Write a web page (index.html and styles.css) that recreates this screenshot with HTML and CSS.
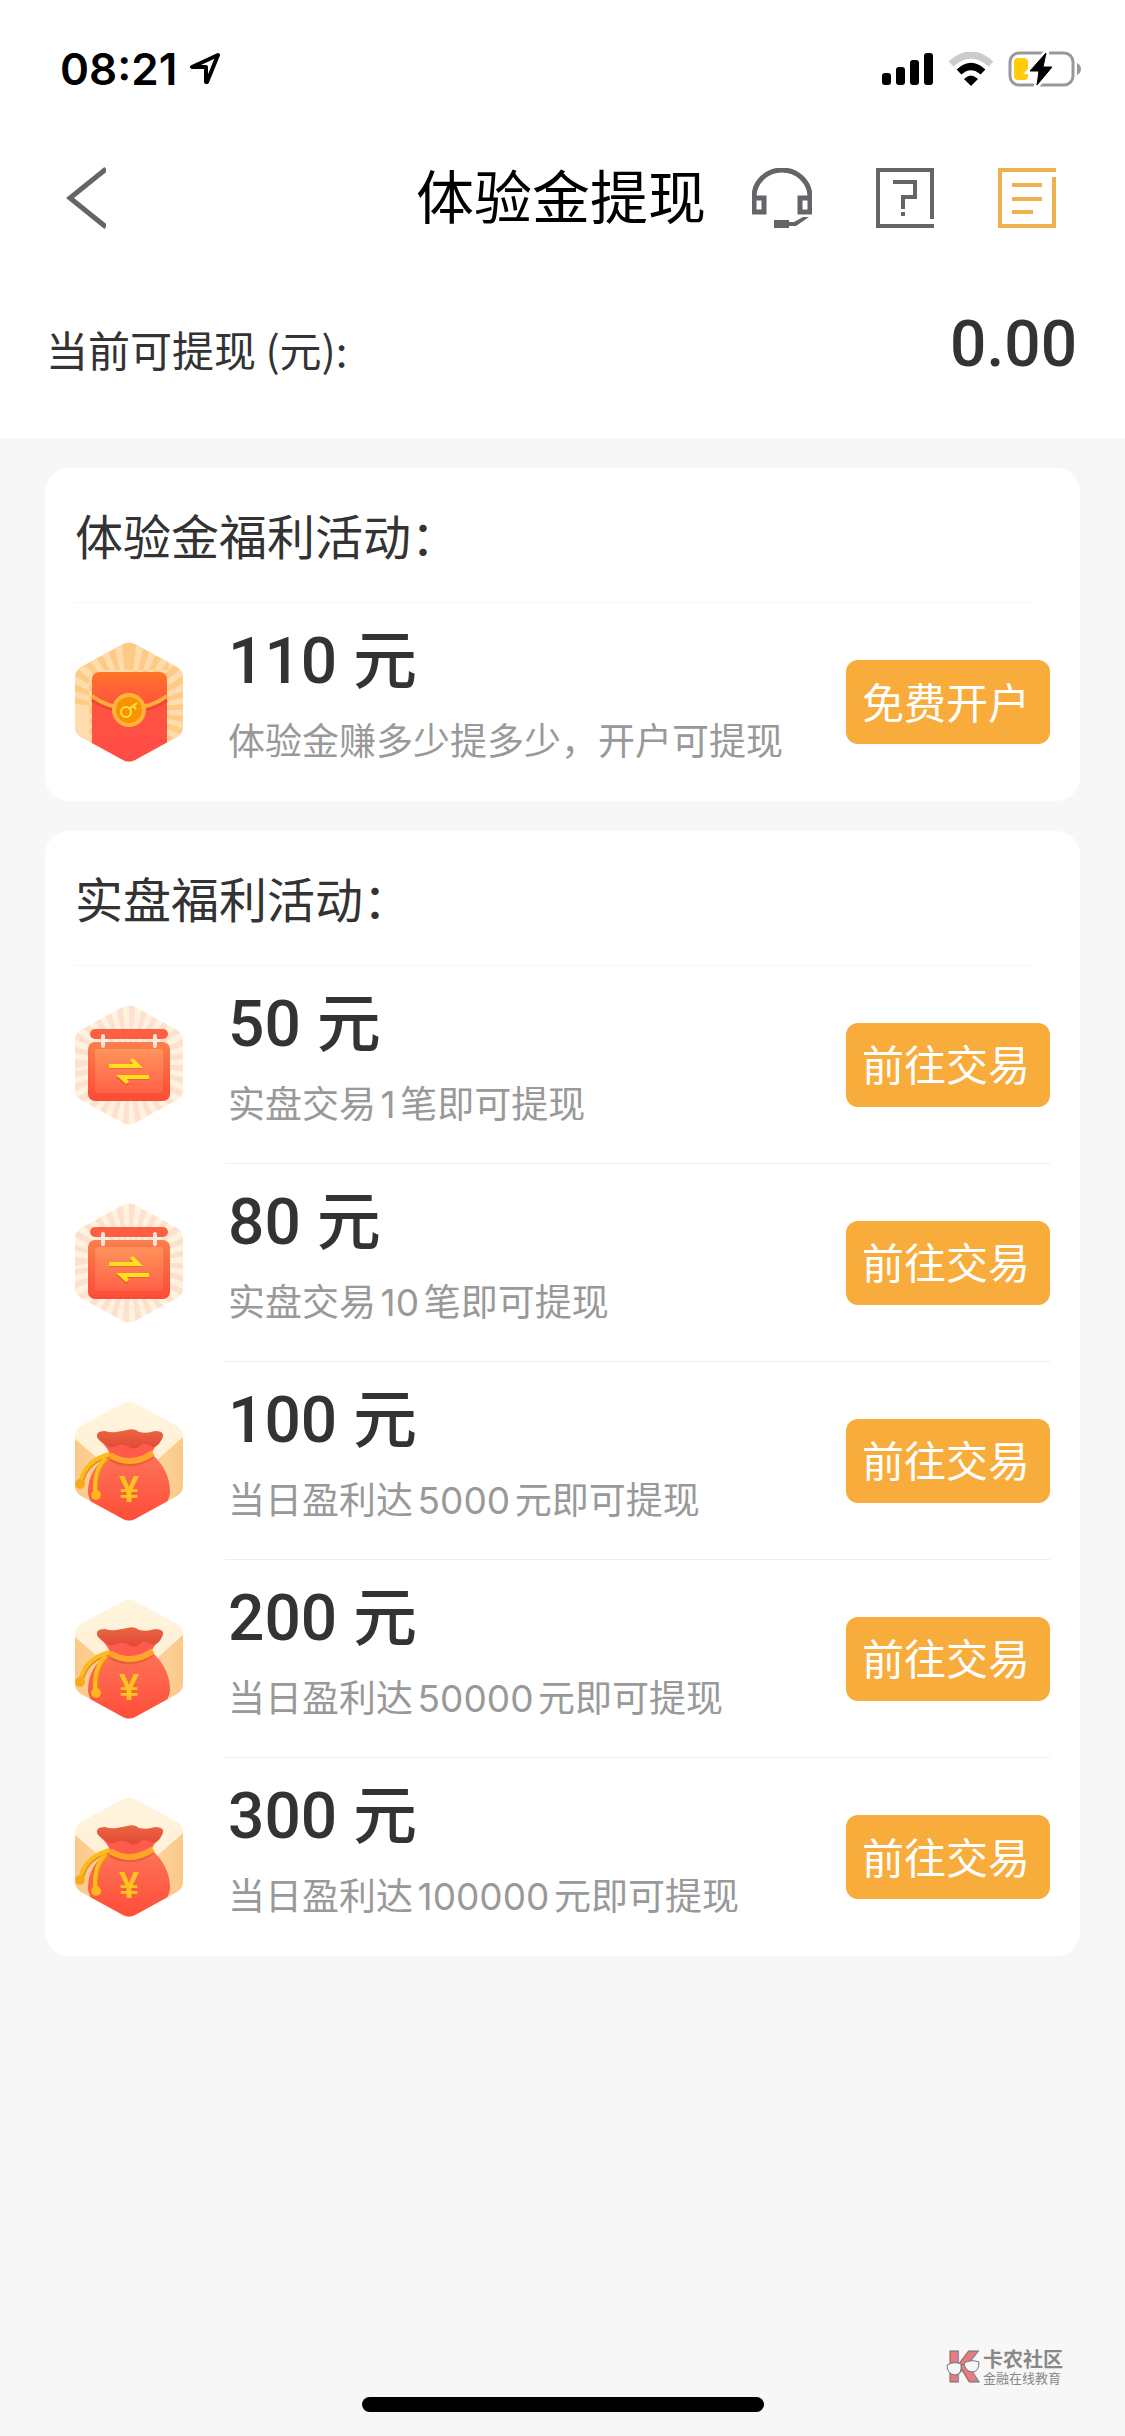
FILE: index.html
```html
<!DOCTYPE html>
<html lang="zh-CN">
<head>
    <meta charset="UTF-8">
    <meta name="viewport" content="width=device-width, initial-scale=1.0">
    <title>体验金提现</title>
    <link rel="stylesheet" href="styles.css">
</head>
<body>
    <!-- 共用图标 -->
    <svg class="icon-defs" aria-hidden="true">
        <defs>
            <clipPath id="hex">
                <path d="M48 2Q54-1 60 2L102 25Q108 29 108 35V85Q108 91 102 95L60 118Q54 121 48 118L6 95Q0 91 0 85V35Q0 29 6 25Z"/>
            </clipPath>
            <linearGradient id="packetFill" x1="0" y1="0" x2="0" y2="1">
                <stop offset="0" stop-color="#ff7426"/>
                <stop offset="0.35" stop-color="#ff5440"/>
                <stop offset="1" stop-color="#ff4c48"/>
            </linearGradient>
            <linearGradient id="boardFill" x1="0" y1="0" x2="0" y2="1">
                <stop offset="0" stop-color="#fb7f4b"/>
                <stop offset="1" stop-color="#fe4a37"/>
            </linearGradient>
            <linearGradient id="boardInner" x1="0" y1="0" x2="0" y2="1">
                <stop offset="0" stop-color="#ff935a"/>
                <stop offset="1" stop-color="#ff6246"/>
            </linearGradient>
            <linearGradient id="bagFill" x1="0" y1="0" x2="0" y2="1">
                <stop offset="0" stop-color="#fd7358"/>
                <stop offset="1" stop-color="#ff4c38"/>
            </linearGradient>
            <linearGradient id="bagTop" x1="0" y1="0" x2="0" y2="1">
                <stop offset="0" stop-color="#ec6443"/>
                <stop offset="1" stop-color="#e04a35"/>
            </linearGradient>
            <linearGradient id="paper" x1="0" y1="0" x2="0" y2="1">
                <stop offset="0" stop-color="#fff4de"/>
                <stop offset="1" stop-color="#ffeecd"/>
            </linearGradient>
            <linearGradient id="paperSide" x1="0" y1="0" x2="1" y2="0">
                <stop offset="0" stop-color="#fbc988"/>
                <stop offset="0.5" stop-color="#fddcae"/>
                <stop offset="1" stop-color="#fbc988"/>
            </linearGradient>
        </defs>

        <symbol id="icon-packet" viewBox="0 0 108 120">
            <g clip-path="url(#hex)">
                <rect width="108" height="120" fill="#fecb87"/>
                <circle class="rays" cx="54" cy="68" r="40" pathLength="56" stroke="#fedcae"/>
                <path d="M17 120V38Q17 30 25 30H84Q92 30 92 38V120Z" fill="url(#packetFill)"/>
                <path d="M17 58Q32 68 54 70Q77 68 92 58" fill="none" stroke="#e63f2d" stroke-width="4" opacity="0.6"/>
                <path d="M17 54Q31 65 54 67Q78 65 92 54" fill="none" stroke="#ffae38" stroke-width="4"/>
                <circle cx="54" cy="68" r="17" fill="#ffb43b"/>
                <circle cx="54" cy="68" r="13" fill="#fb9200"/>
                <circle cx="51" cy="70" r="5" fill="none" stroke="#ffe645" stroke-width="2"/>
                <path d="M54 67L62 61M58 64L61 67" fill="none" stroke="#ffe645" stroke-width="2"/>
            </g>
        </symbol>

        <symbol id="icon-board" viewBox="0 0 108 120">
            <g clip-path="url(#hex)">
                <rect width="108" height="120" fill="#fff3de"/>
                <circle class="rays" cx="54" cy="60" r="40" pathLength="56" stroke="#fde0d0"/>
                <rect x="15" y="24" width="78" height="10" rx="5" fill="#fe5f42"/>
                <rect x="13" y="37" width="82" height="59" rx="7" fill="url(#boardFill)"/>
                <rect x="20" y="44" width="68" height="44" rx="3" fill="url(#boardInner)"/>
                <rect x="26" y="29" width="4" height="14" rx="2" fill="#ffe6dd"/>
                <rect x="78" y="29" width="4" height="14" rx="2" fill="#ffe6dd"/>
                <path d="M34 61H58L55 57L58 54L68 64H34ZM74 72H41L51 81L54 79L52 75H74Z" fill="#c93a1c" opacity="0.35"/>
                <path d="M34 59H58L55 55L58 53L68 63H34ZM74 70H41L51 79L54 77L52 74H74Z" fill="#ffe01e"/>
            </g>
        </symbol>

        <symbol id="icon-bag" viewBox="0 0 108 120">
            <g clip-path="url(#hex)">
                <rect width="108" height="120" fill="url(#paper)"/>
                <path d="M0 38L54 84L108 36V120H0Z" fill="url(#paperSide)"/>
                <path d="M34 54Q13 68 13 91Q13 110 54 121Q95 110 95 91Q95 70 78 54Z" fill="url(#bagFill)"/>
                <path d="M24 39Q34 47 36 56Q56 66 76 54Q78 47 86 39Z" fill="#ff5a4c"/>
                <path d="M23 38Q19 30 30 30Q36 32 41 31Q48 30 52 29Q60 27 64 31Q72 33 80 30Q91 30 87 38Q83 46 78 46Q71 41 66 44Q60 50 54 46Q47 42 42 45Q35 48 31 44Q27 40 23 38Z" fill="url(#bagTop)"/>
                <path d="M35 58Q56 70 78 55" fill="none" stroke="#e3582b" stroke-width="4" opacity="0.7"/>
                <path d="M35 54Q56 67 78 52" fill="none" stroke="#ffa52b" stroke-width="6"/>
                <path d="M35 54Q12 60 7 79M32 58Q20 68 21 90" fill="none" stroke="#e58d1b" stroke-width="5"/>
                <path d="M35 53Q11 59 6 79M31 57Q19 68 20 90" fill="none" stroke="#ffba20" stroke-width="4"/>
                <circle cx="5" cy="83" r="5" fill="#f9a91d"/>
                <circle cx="21" cy="94" r="5" fill="#ffb61f"/>
            </g>
        </symbol>
    </svg>

    <header class="main-header">
        <div class="status-bar">
            <div class="status-left">
                <span>08:21</span>
                <svg width="32" height="32" viewBox="0 0 32 32" fill="none" stroke="#000" stroke-width="4" stroke-linejoin="round">
                    <path d="M29 2L3 14H17V29H18Z"/>
                </svg>
            </div>
            <div class="status-right">
                <svg width="52" height="34" viewBox="0 0 52 34">
                    <rect x="0" y="21" width="9" height="12" rx="3"/>
                    <rect x="14" y="15" width="9" height="18" rx="3"/>
                    <rect x="28" y="8" width="9" height="25" rx="3"/>
                    <rect x="42" y="1" width="9" height="32" rx="3"/>
                </svg>
                <svg width="46" height="34" viewBox="0 0 46 34">
                    <path d="M3 12Q23-6 43 12" fill="none" stroke="#ccc" stroke-width="7"/>
                    <path d="M11 20Q23 9 35 20" fill="none" stroke="#000" stroke-width="7"/>
                    <path d="M16 27Q23 20 30 27L23 34Z"/>
                </svg>
                <svg width="74" height="36" viewBox="0 0 74 36">
                    <rect x="2" y="2" width="63" height="32" rx="9" fill="none" stroke="#999" stroke-width="3"/>
                    <path d="M69 12Q73 14 73 18Q73 22 69 24Z" fill="#999"/>
                    <rect x="6" y="7" width="14" height="22" rx="4" fill="#ffcc0a"/>
                    <path d="M38 2L22 20H31L29 34L44 16H35Z" stroke="#fff" stroke-width="6"/>
                    <path d="M38 2L22 20H31L29 34L44 16H35Z" stroke="#000" stroke-width="1" stroke-linejoin="round"/>
                </svg>
            </div>
        </div>

        <nav class="nav-bar">
            <button class="icon-btn" aria-label="返回">
                <svg width="40" height="62" viewBox="0 0 40 62" fill="none" stroke="#646569" stroke-width="5">
                    <path d="M40 2L4 31L40 60"/>
                </svg>
            </button>
            <h1 class="page-title">体验金提现</h1>
            <div class="nav-actions">
                <button class="icon-btn" aria-label="客服">
                    <svg width="60" height="60" viewBox="0 0 60 60" fill="none" stroke="#646569">
                        <path d="M2 30V29A28 27 0 0 1 58 29V30" stroke-width="5"/>
                        <path d="M2 30H12V44H2ZM48 30H58V44H48Z" stroke-width="5"/>
                        <path d="M22 52H37V54H42L51 49H57L44 58H37V60H22Z" fill="#646569" stroke="none"/>
                    </svg>
                </button>
                <button class="icon-btn" aria-label="帮助">
                    <svg width="58" height="60" viewBox="0 0 58 60" fill="none" stroke="#646569" stroke-width="4">
                        <path d="M56 51V2H2V58H58"/>
                        <path d="M17 14H39V29H27V41M27 44V48"/>
                    </svg>
                </button>
                <button class="icon-btn" aria-label="明细">
                    <svg width="58" height="60" viewBox="0 0 58 60" fill="none" stroke="#efb050" stroke-width="4">
                        <path d="M58 2H2V58H56V9"/>
                        <path d="M14 17H44M14 31H44M14 44H35"/>
                    </svg>
                </button>
            </div>
        </nav>

        <div class="balance">
            <span class="balance-label">当前可提现 (元):</span>
            <span class="balance-num">0.00</span>
        </div>
    </header>

    <main class="main-body">
        <section class="card">
            <h2 class="card-title">体验金福利活动：</h2>
            <ul class="task-list">
                <li class="task">
                    <svg class="task-icon" viewBox="0 0 108 120"><use href="#icon-packet"/></svg>
                    <div class="task-body">
                        <div class="task-text">
                            <div class="amount">110 元</div>
                            <div class="desc">体验金赚多少提多少，开户可提现</div>
                        </div>
                        <button class="task-btn">免费开户</button>
                    </div>
                </li>
            </ul>
        </section>

        <section class="card">
            <h2 class="card-title">实盘福利活动：</h2>
            <ul class="task-list">
                <li class="task">
                    <svg class="task-icon" viewBox="0 0 108 120"><use href="#icon-board"/></svg>
                    <div class="task-body">
                        <div class="task-text">
                            <div class="amount">50 元</div>
                            <div class="desc">实盘交易1笔即可提现</div>
                        </div>
                        <button class="task-btn">前往交易</button>
                    </div>
                </li>
                <li class="task">
                    <svg class="task-icon" viewBox="0 0 108 120"><use href="#icon-board"/></svg>
                    <div class="task-body">
                        <div class="task-text">
                            <div class="amount">80 元</div>
                            <div class="desc">实盘交易10笔即可提现</div>
                        </div>
                        <button class="task-btn">前往交易</button>
                    </div>
                </li>
                <li class="task">
                    <svg class="task-icon" viewBox="0 0 108 120"><use href="#icon-bag"/><text x="54" y="101" class="yen">¥</text></svg>
                    <div class="task-body">
                        <div class="task-text">
                            <div class="amount">100 元</div>
                            <div class="desc">当日盈利达5000元即可提现</div>
                        </div>
                        <button class="task-btn">前往交易</button>
                    </div>
                </li>
                <li class="task">
                    <svg class="task-icon" viewBox="0 0 108 120"><use href="#icon-bag"/><text x="54" y="101" class="yen">¥</text></svg>
                    <div class="task-body">
                        <div class="task-text">
                            <div class="amount">200 元</div>
                            <div class="desc">当日盈利达50000元即可提现</div>
                        </div>
                        <button class="task-btn">前往交易</button>
                    </div>
                </li>
                <li class="task">
                    <svg class="task-icon" viewBox="0 0 108 120"><use href="#icon-bag"/><text x="54" y="101" class="yen">¥</text></svg>
                    <div class="task-body">
                        <div class="task-text">
                            <div class="amount">300 元</div>
                            <div class="desc">当日盈利达100000元即可提现</div>
                        </div>
                        <button class="task-btn">前往交易</button>
                    </div>
                </li>
            </ul>
        </section>
    </main>

    <footer class="main-footer">
        <div class="watermark">
            <svg class="mark-logo" width="34" height="36" viewBox="0 0 34 36">
                <text x="18" y="33" class="mark-k">K</text>
                <path d="M1 16Q8 12 15 15Q16 26 9 26Q1 25 1 16ZM18 14Q26 10 33 13Q33 23 26 23Q19 22 18 14ZM15 16L18 15" fill="#f7f7f7" stroke="#777" stroke-width="1"/>
            </svg>
            <div>
                <div class="mark-name">卡农社区</div>
                <div class="mark-sub">金融在线教育</div>
            </div>
        </div>
        <div class="home-indicator"></div>
    </footer>
</body>
</html>
```
FILE: styles.css
```css
* {
    box-sizing: border-box;
}

body {
    margin: 0;
    min-height: 100vh;
    display: flex;
    flex-direction: column;
    background-color: #f7f7f7;
    color: #333;
    font-family: Inter, "Noto Sans CJK SC", sans-serif;
}

button {
    border: none;
    padding: 0;
    background: none;
    font-family: inherit;
    cursor: pointer;
}

svg {
    display: block;
    flex-shrink: 0;
}

.icon-defs {
    position: absolute;
    width: 0;
    height: 0;
}

/* 顶部 */
.main-header {
    background-color: #fff;
}

.status-bar {
    height: 138px;
    padding: 0 43px 0 60px;
    display: flex;
    justify-content: space-between;
    align-items: center;
    color: #000;
}

.status-left {
    display: flex;
    align-items: center;
    gap: 12px;
    font-size: 44px;
    font-weight: 600;
}

.status-right {
    display: flex;
    align-items: center;
    gap: 14px;
}

.nav-bar {
    height: 120px;
    padding: 0 69px 0 66px;
    display: grid;
    grid-template-columns: 1fr auto 1fr;
    align-items: center;
}

.icon-btn {
    justify-self: start;
}

.page-title {
    margin: 0;
    padding-bottom: 8px;
    font-size: 58px;
    font-weight: 400;
    color: #000;
}

.nav-actions {
    display: flex;
    justify-content: flex-end;
    gap: 64px;
}

.balance {
    height: 180px;
    padding: 0 48px 0 46px;
    display: flex;
    justify-content: space-between;
    align-items: center;
}

.balance-label {
    font-family: "Noto Sans CJK SC", sans-serif;
    font-size: 42px;
}

.balance-num {
    padding-bottom: 8px;
    font-family: Roboto, sans-serif;
    font-size: 64px;
    font-weight: 500;
}

/* 活动卡片 */
.main-body {
    flex: 1;
    padding: 30px 45px;
    display: flex;
    flex-direction: column;
    gap: 30px;
}

.card {
    padding: 0 30px;
    border-radius: 24px;
    background-color: #fff;
}

.card-title {
    margin: 0 15px 0 0;
    height: 135px;
    line-height: 140px;
    border-bottom: 1px solid #f7f7f7;
    font-size: 48px;
    font-weight: 400;
}

.task-list {
    margin: 0;
    padding: 0;
    list-style: none;
}

.task {
    display: flex;
    align-items: center;
    gap: 42px;
}

.task-icon {
    width: 108px;
    height: 120px;
}

.task-body {
    flex: 1;
    height: 198px;
    padding-left: 3px;
    display: flex;
    justify-content: space-between;
    align-items: center;
    border-bottom: 1px solid #eee;
}

.task:last-child .task-body {
    border-bottom: none;
}

.task-text {
    padding-bottom: 16px;
}

.amount {
    font-family: Roboto, "Noto Sans CJK SC", sans-serif;
    font-size: 64px;
    font-weight: 500;
    line-height: 96px;
}

.desc {
    font-size: 37px;
    line-height: 64px;
    color: #999;
    text-autospace: normal;
}

.task-btn {
    width: 204px;
    height: 84px;
    padding: 0 4px 4px 0;
    border-radius: 12px;
    background-color: #f8ac3b;
    color: #fff;
    font-size: 42px;
}

.rays {
    fill: none;
    stroke-width: 80;
    stroke-dasharray: 1 1;
}

.yen {
    fill: #ffc31f;
    font-family: "Liberation Sans", sans-serif;
    font-size: 36px;
    font-weight: 700;
    text-anchor: middle;
}

/* 底部 */
.main-footer {
    padding-bottom: 24px;
}

.watermark {
    display: flex;
    justify-content: flex-end;
    align-items: center;
    gap: 3px;
    margin-bottom: 12px;
    padding-right: 62px;
    color: #888;
}

.mark-logo {
    overflow: visible;
}

.mark-k {
    fill: #e77b82;
    stroke: #777;
    stroke-width: 1px;
    font-family: Inter, sans-serif;
    font-size: 42px;
    font-weight: 900;
    text-anchor: middle;
}

.mark-name {
    font-size: 20px;
    font-weight: 700;
    line-height: 22px;
}

.mark-sub {
    font-size: 13px;
    line-height: 14px;
}

.home-indicator {
    width: 402px;
    height: 15px;
    margin: 0 auto;
    border-radius: 8px;
    background-color: #000;
}
```
